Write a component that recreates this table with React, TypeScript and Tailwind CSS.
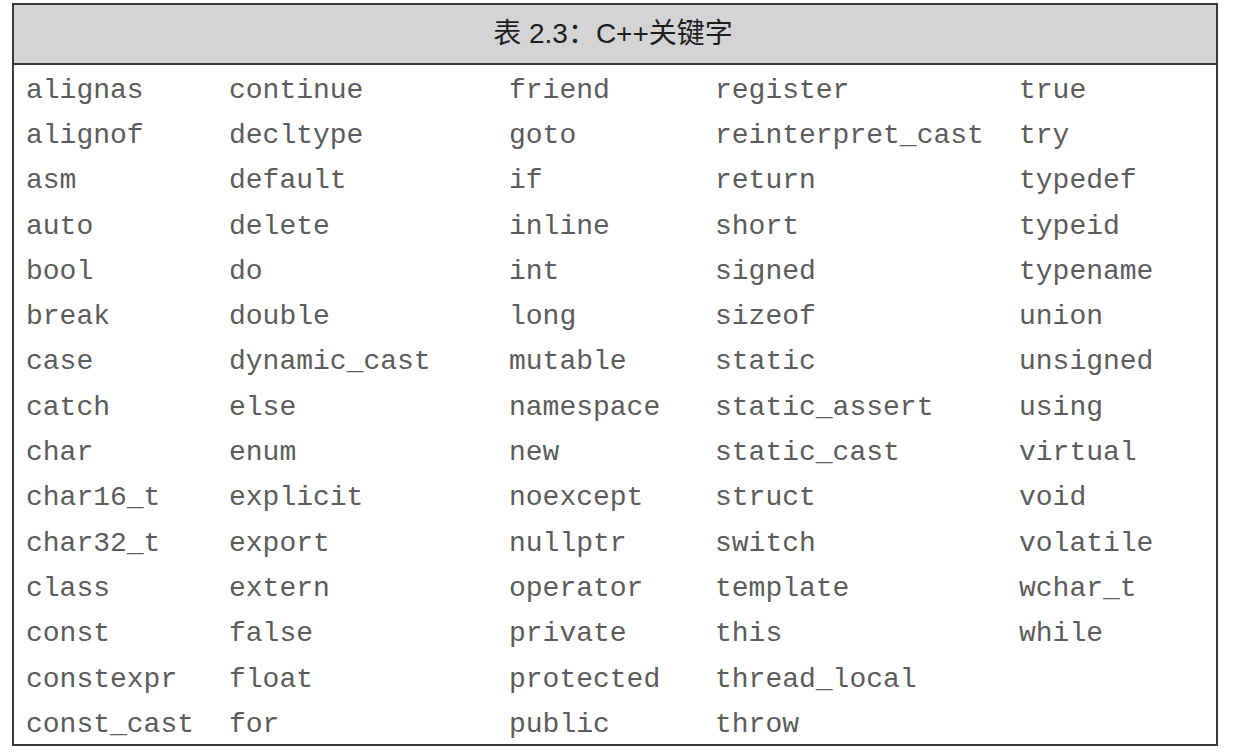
const rows: string[][] = [
  ["alignas", "continue", "friend", "register", "true"],
  ["alignof", "decltype", "goto", "reinterpret_cast", "try"],
  ["asm", "default", "if", "return", "typedef"],
  ["auto", "delete", "inline", "short", "typeid"],
  ["bool", "do", "int", "signed", "typename"],
  ["break", "double", "long", "sizeof", "union"],
  ["case", "dynamic_cast", "mutable", "static", "unsigned"],
  ["catch", "else", "namespace", "static_assert", "using"],
  ["char", "enum", "new", "static_cast", "virtual"],
  ["char16_t", "explicit", "noexcept", "struct", "void"],
  ["char32_t", "export", "nullptr", "switch", "volatile"],
  ["class", "extern", "operator", "template", "wchar_t"],
  ["const", "false", "private", "this", "while"],
  ["constexpr", "float", "protected", "thread_local", ""],
  ["const_cast", "for", "public", "throw", ""],
];

// 表格：C++ 关键字（扫描件风格）
export default function App() {
  return (
    <div className="min-h-[756px] w-[1234px] bg-white pt-[3px] pl-[12px]">
      <div className="w-[1206px] border-2 border-[#3a3a3a]">
        <div className="flex h-[60px] items-center justify-center border-b-2 border-[#3a3a3a] bg-[#d4d4d4] pr-[4px]">
          <span
            className="text-[28px] text-[#1e1e1e]"
            style={{ fontFamily: '"Liberation Sans", "Noto Sans CJK SC", sans-serif' }}
          >
            表 2.3：C++关键字
          </span>
        </div>
        <div
          className="grid grid-cols-[203px_280px_206px_304px_1fr] auto-rows-[45.3px] text-[28px] text-[#5c5c5c]"
          style={{ fontFamily: '"Liberation Mono", monospace' }}
        >
          {rows.map((r, i) =>
            r.map((w, j) => (
              <div key={`${i}-${j}`} className="flex items-center whitespace-pre pl-[12px] pt-[6px]">
                {w}
              </div>
            ))
          )}
        </div>
      </div>
    </div>
  );
}
